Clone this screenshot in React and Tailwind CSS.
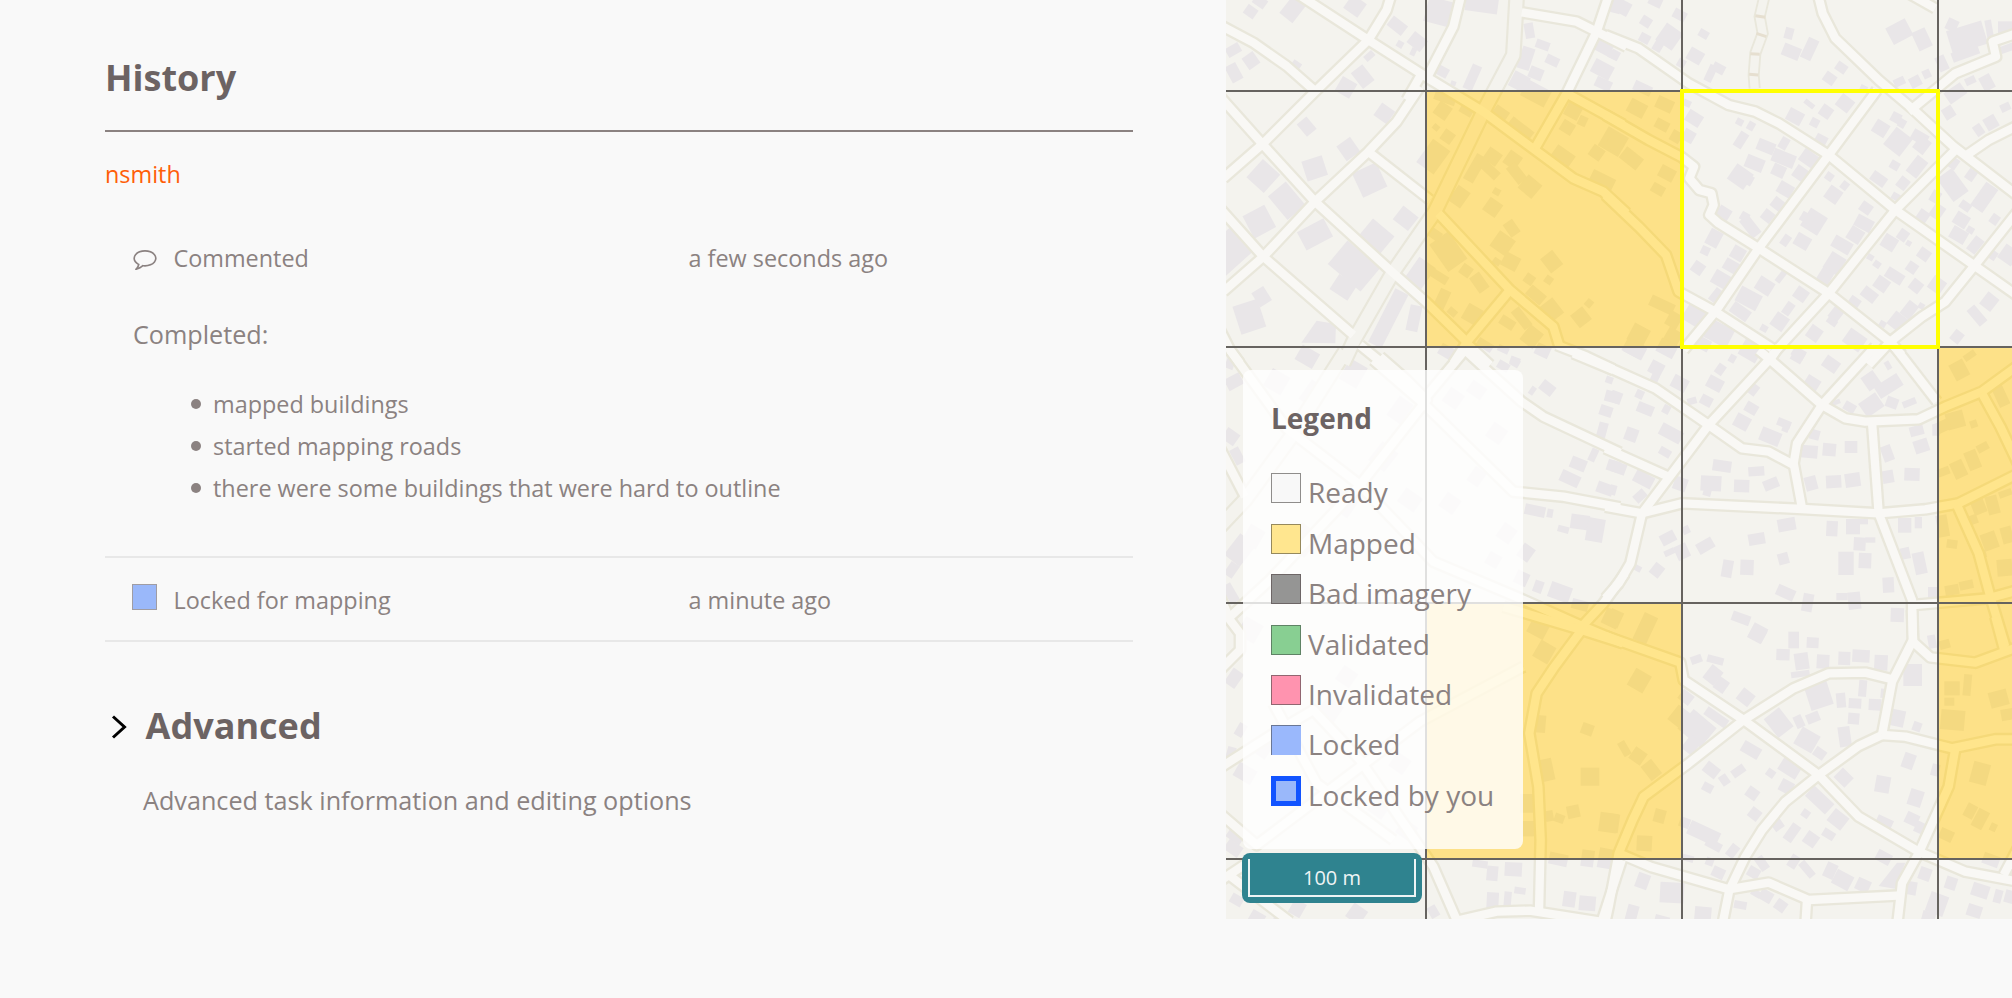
import React from 'react';

/* Street data is stored per map sheet; each sheet has its own origin and uses third-of-a-pixel units. */
const SHEETS = [
  {
    origin: [-6, 0],
    main: ['890,-10 880,165 795,325 645,635 520,815 405,1015 370,1090'],
    roads: [
      '0,75 100,128 200,198 287,275',
      '230,-20 445,120 625,235 790,335 945,450 1060,535 1150,575 1220,640',
      '515,-20 500,30 445,120 285,275 130,430 10,535',
      '0,290 130,435 285,605 515,815 620,908 740,1025',
      '600,260 530,365 445,455 285,605 130,770 10,875',
      '445,455 630,600',
      '0,625 130,770 400,1005',
      '722,-10 700,80 625,225',
      '905,37 1070,65 1130,95 1220,140',
      '1165,-10 1130,95 1040,280 945,445',
      '1045,283 1176,355 1210,374',
      '655,640 870,870 1000,980 1017,1035',
      '870,870 745,1020 700,1090',
      '1010,1035 1100,1070 1180,1108',
      '0,990 30,1050 60,1090',
      '420,1035 500,1100',
      '740,1030 810,1095',
      '600,230 560,300',
    ],
    blds: [
      [92, 35, 36, 32, 35], [120, 5, 40, 30, 35], [218, 28, 50, 66, 38], [40, 150, 44, 30, -30], [93, 182, 40, 42, -35],
      [42, 218, 36, 54, -28], [405, 18, 52, 50, 35], [532, 77, 54, 36, 38], [540, 133, 20, 20, 30], [592, 125, 50, 42, 38],
      [580, 155, 16, 24, 25], [448, 168, 32, 20, -42], [428, 230, 44, 60, -38], [378, 262, 50, 50, 30], [230, 193, 28, 18, 35],
      [493, 340, 48, 46, 35], [260, 380, 38, 48, -40], [385, 447, 50, 54, -35], [284, 505, 64, 62, -18], [130, 528, 70, 74, 42],
      [200, 602, 70, 92, -40], [118, 665, 74, 76, -28], [449, 540, 80, 80, -25], [557, 655, 58, 52, 38], [470, 708, 84, 66, 40],
      [285, 703, 90, 62, -28], [402, 798, 128, 92, 40], [370, 862, 64, 54, 33], [18, 760, 150, 100, -42], [125, 890, 42, 50, -32],
      [88, 950, 78, 88, -18], [505, 955, 44, 180, 27], [582, 955, 36, 78, 12], [600, 820, 60, 80, 35], [655, 35, 74, 76, 15],
      [785, 15, 98, 44, 8], [668, 215, 34, 30, 28], [757, 232, 30, 78, 24], [700, 250, 16, 14, 20], [928, 92, 28, 46, -10],
      [968, 135, 42, 26, 20], [918, 175, 38, 68, 18], [997, 182, 40, 28, 25], [948, 220, 42, 36, 22], [898, 245, 52, 50, 28],
      [948, 280, 80, 54, 28], [1152, 145, 48, 34, 28], [1147, 208, 62, 44, 28], [1185, 165, 26, 28, 28], [1150, 252, 50, 32, 25],
      [1190, 15, 30, 50, 15], [668, 332, 44, 44, 35], [675, 295, 66, 26, 20], [740, 330, 40, 30, 30], [683, 410, 36, 36, 35],
      [648, 382, 20, 18, 40], [640, 470, 64, 86, 36], [718, 590, 44, 56, 35], [765, 505, 34, 86, 30], [818, 470, 46, 42, 35],
      [808, 508, 66, 30, 43], [878, 480, 44, 46, 35], [930, 560, 54, 52, 40], [890, 520, 34, 62, -38], [830, 575, 22, 20, 30],
      [818, 622, 46, 46, 35], [843, 338, 46, 30, 35], [903, 385, 80, 30, 38], [1060, 332, 46, 46, 28], [1042, 382, 40, 36, 32],
      [1088, 363, 26, 30, 25], [1028, 470, 64, 46, 35], [1130, 458, 40, 38, 35], [1180, 425, 70, 66, 30], [1145, 545, 74, 48, 26],
      [875, 685, 34, 46, -35], [848, 730, 58, 56, 35], [872, 785, 50, 44, 28], [830, 785, 24, 20, 35], [995, 785, 46, 54, -38],
      [928, 838, 30, 30, 35], [986, 840, 24, 24, 35], [948, 885, 56, 36, 40], [995, 930, 50, 58, -38], [1107, 910, 22, 24, 40],
      [1083, 952, 46, 48, -38], [685, 755, 70, 100, -35], [738, 812, 34, 34, 35], [778, 848, 36, 56, -35], [650, 825, 74, 26, 32],
      [665, 900, 34, 66, 25], [697, 936, 28, 22, 40], [757, 943, 50, 52, 30], [862, 968, 46, 30, 32], [905, 955, 30, 68, -38],
      [935, 1010, 50, 56, 38], [640, 700, 50, 30, 35], [680, 1055, 46, 36, 30], [968, 1052, 44, 36, 25], [795, 1035, 50, 26, 32],
      [850, 1048, 34, 20, 25], [262, 1070, 60, 50, 30], [885, 1082, 30, 22, 20],
    ],
    polys: ['290,962 348,972 346,1030 244,1028'],
  },
  {
    origin: [386, 0],
    steps: '457,-10 443,50 452,100 430,160 425,225 428,265',
    roads: [
      '-20,105 80,145 230,250 350,315 430,335 500,370 650,465 850,630 1085,795 1220,890',
      '617,-20 632,40 670,115 800,240 900,325 1025,440 1220,590',
      '890,335 1030,220 1152,170 1142,125 1220,98',
      '795,270 650,465 440,745 310,935 215,1050',
      '1030,450 850,630 650,880 480,1065',
      '1060,468 1130,420 1220,375',
      '-20,345 110,420 210,472 246,500 232,535 262,570 298,580 305,615 292,645 320,670 440,745 650,880 830,1022 870,1065',
      '-20,585 80,680 162,765 200,875 310,935 480,1045',
      '1220,630 1085,800 1000,905 930,950 835,1025 770,1095',
      '890,-20 970,25',
    ],
    blds: [
      [28, 20, 54, 42, 28], [130, 5, 40, 28, 25], [203, 45, 40, 30, 28], [102, 65, 32, 30, 32], [98, 115, 32, 28, 28],
      [172, 110, 60, 62, 35], [140, 135, 28, 40, 30], [275, 102, 30, 24, 30], [250, 168, 46, 40, 30], [5, 165, 30, 26, 25],
      [208, 190, 24, 26, 30], [296, 220, 24, 52, 25], [320, 205, 38, 28, 28], [531, 100, 26, 34, 15], [538, 155, 54, 38, 22],
      [593, 147, 34, 66, 25], [653, 235, 36, 32, 35], [688, 203, 34, 28, 35], [862, 95, 66, 56, -28], [930, 118, 44, 60, -25],
      [862, 245, 34, 24, -25], [910, 245, 34, 32, -28], [944, 222, 24, 26, -25], [1020, 75, 34, 36, 25], [1065, 112, 110, 72, -17],
      [1060, 160, 84, 30, -20], [1132, 90, 20, 60, -10], [1180, 82, 44, 36, 0], [990, 190, 30, 46, -25], [1185, 145, 40, 22, -20],
      [1075, 242, 32, 22, -25], [1125, 248, 36, 46, -28], [1030, 280, 60, 40, -35], [1010, 338, 34, 36, -32], [1180, 322, 30, 24, -25],
      [1137, 368, 38, 40, -30], [1100, 390, 26, 34, -35], [75, 325, 54, 44, 28], [158, 313, 52, 38, 25], [150, 375, 42, 30, 28],
      [92, 265, 56, 30, 25], [192, 410, 32, 34, 30], [58, 475, 64, 42, 38], [165, 520, 48, 38, 28], [138, 568, 40, 30, 30],
      [10, 428, 46, 50, 35], [246, 355, 48, 38, 32], [230, 408, 36, 36, 30], [225, 310, 24, 20, 25], [383, 366, 22, 20, 28],
      [417, 378, 22, 26, 30], [387, 420, 28, 50, 32], [549, 350, 48, 40, 28], [592, 312, 34, 16, 38], [608, 368, 26, 26, 28],
      [642, 335, 36, 36, 35], [699, 310, 46, 42, 38], [628, 418, 36, 26, 28], [755, 265, 22, 18, 25], [462, 440, 54, 36, 22],
      [516, 430, 26, 36, 30], [428, 490, 56, 40, 22], [515, 475, 70, 40, 22], [590, 475, 50, 42, 35], [500, 512, 40, 36, 25],
      [565, 520, 40, 40, 35], [385, 530, 60, 56, 35], [410, 540, 26, 30, 30], [520, 568, 46, 38, 30], [497, 612, 36, 34, 38],
      [467, 648, 34, 34, 38], [335, 640, 40, 38, 32], [415, 680, 34, 66, -38], [398, 650, 26, 26, 30], [306, 715, 40, 50, 28],
      [280, 752, 26, 26, 25], [258, 804, 36, 36, 35], [378, 760, 40, 40, 30], [357, 798, 44, 36, 30], [326, 838, 50, 44, 30],
      [310, 885, 22, 44, 38], [652, 530, 24, 24, 35], [664, 584, 44, 44, 35], [698, 557, 22, 26, 38], [606, 665, 60, 62, 32],
      [585, 655, 40, 30, 30], [521, 721, 24, 34, 35], [571, 724, 46, 40, 30], [762, 624, 36, 32, 35], [756, 670, 54, 38, 28],
      [730, 705, 44, 44, 32], [690, 735, 60, 38, 30], [668, 790, 50, 56, 32], [640, 828, 40, 44, 32], [806, 385, 44, 42, 32],
      [852, 353, 30, 30, 28], [858, 425, 62, 66, 38], [870, 370, 22, 26, 30], [923, 412, 50, 34, 30], [930, 435, 40, 46, 38],
      [800, 537, 48, 32, 35], [848, 496, 28, 26, 30], [873, 550, 32, 36, 38], [915, 500, 40, 60, 38], [851, 590, 24, 22, 30],
      [1022, 555, 56, 86, -36], [1077, 525, 28, 34, 35], [1025, 490, 26, 34, 35], [970, 590, 28, 36, 30], [1117, 592, 44, 84, 35],
      [1060, 618, 34, 26, 35], [1048, 660, 44, 40, 32], [1040, 705, 50, 40, 30], [1075, 690, 22, 20, 30], [1090, 735, 32, 50, 38],
      [933, 648, 34, 34, 35], [976, 635, 36, 44, 35], [1148, 658, 26, 30, 35], [1190, 765, 50, 50, 35], [1142, 765, 26, 28, 35],
      [873, 706, 30, 34, 35], [890, 730, 16, 16, 30], [832, 728, 44, 42, 32], [936, 763, 36, 34, 35], [900, 803, 32, 32, 35],
      [848, 828, 56, 34, 32], [912, 858, 36, 36, 38], [809, 852, 42, 40, 35], [772, 884, 48, 34, 38], [728, 905, 34, 26, 35],
      [795, 793, 22, 20, 35], [775, 772, 20, 18, 30], [1132, 905, 42, 46, 38], [1095, 947, 30, 62, -40], [1035, 1010, 32, 36, 38],
      [975, 855, 44, 44, 35], [892, 930, 36, 50, 38], [928, 918, 18, 18, 30], [857, 965, 48, 48, 38], [812, 972, 20, 18, 30],
      [458, 858, 50, 44, 32], [507, 830, 18, 40, 38], [567, 883, 40, 38, 35], [410, 895, 70, 50, 28], [385, 935, 60, 36, 35],
      [529, 926, 26, 40, 35], [503, 965, 44, 46, 35], [456, 985, 22, 20, 30], [245, 945, 56, 56, 32], [320, 1000, 80, 60, 28],
      [270, 1030, 50, 36, 28], [607, 1000, 40, 42, 35], [672, 942, 34, 40, 38], [660, 965, 32, 20, 35], [728, 1020, 60, 50, 35],
      [150, 915, 76, 34, 25], [80, 1005, 54, 56, 28], [185, 960, 40, 46, 30], [180, 1015, 46, 56, 30], [65, 1045, 60, 44, 28],
      [420, 1045, 60, 70, 30], [560, 1060, 40, 30, 30],
    ],
    polys: [],
  },
  {
    origin: [386, 340],
    roads: [
      '-20,78 130,145 290,255 390,325 470,335 545,375',
      '500,20 480,50 290,255 90,520 55,670 20,730 -20,775',
      '440,30 470,55 630,195 700,235 760,245 920,238 1000,200 1110,155 1220,75',
      '790,20 630,195 555,310 545,370 570,505',
      '840,10 975,185',
      '1110,160 1165,260 1220,375',
      '780,245 800,520',
      '-20,500 90,520 210,490 570,507 800,520 940,508 1040,490 1220,400',
      '-20,325 165,408',
      '800,520 900,780 903,900',
      '1035,495 1100,640 1135,770 1180,920',
      '905,795 1130,775 1220,750',
    ],
    blds: [
      [70, 30, 60, 40, 28], [165, 25, 56, 44, 28], [133, 85, 42, 40, 28], [128, 115, 24, 24, 25], [203, 130, 48, 40, 28],
      [83, 163, 24, 26, 25], [100, 207, 50, 32, 22], [163, 208, 22, 26, 28], [12, 172, 34, 36, 20], [58, 284, 38, 40, 20],
      [177, 280, 70, 38, 28], [159, 337, 36, 24, 30], [20, 384, 44, 34, 20], [95, 418, 60, 38, 28], [84, 468, 38, 28, -42],
      [205, 432, 40, 40, 20], [3, 450, 20, 30, 15], [309, 131, 48, 38, 28], [325, 88, 26, 32, 35], [361, 56, 20, 24, 30],
      [283, 182, 36, 30, 28], [240, 183, 28, 20, -15], [422, 147, 32, 34, 38], [418, 205, 38, 32, 30], [390, 246, 46, 42, 28],
      [475, 290, 62, 42, 22], [516, 250, 42, 24, 22], [522, 262, 20, 28, 22], [558, 48, 36, 38, 30], [600, 130, 44, 38, 32],
      [657, 73, 48, 38, 35], [777, 122, 44, 48, -35], [830, 138, 80, 42, -32], [778, 195, 62, 50, -35], [840, 188, 36, 32, 20],
      [892, 188, 42, 20, -22], [713, 202, 36, 28, 30], [672, 187, 26, 14, -20], [828, 76, 16, 26, -30], [785, 55, 34, 44, 35],
      [608, 284, 30, 30, 15], [592, 335, 50, 38, 5], [652, 329, 40, 38, 5], [717, 321, 38, 36, 0], [826, 340, 32, 48, -20],
      [828, 410, 34, 38, -10], [914, 272, 42, 30, -15], [928, 318, 44, 40, -18], [900, 403, 46, 38, 2], [972, 270, 22, 34, 0],
      [330, 378, 56, 34, 8], [297, 430, 62, 46, 3], [286, 455, 24, 26, 15], [389, 438, 46, 38, 2], [433, 394, 48, 28, -4],
      [477, 432, 46, 32, -22], [597, 430, 36, 42, -15], [665, 425, 46, 38, -3], [722, 420, 46, 42, -8], [524, 554, 54, 38, -10],
      [434, 597, 50, 34, -10], [514, 656, 32, 34, -15], [346, 686, 32, 52, 10], [405, 682, 40, 46, 2], [280, 617, 52, 34, -30],
      [168, 594, 46, 34, -28], [222, 570, 22, 24, -25], [210, 635, 40, 44, -25], [172, 637, 32, 18, -25], [135, 691, 34, 38, 38],
      [77, 685, 22, 18, 28], [660, 566, 34, 46, 3], [723, 560, 42, 46, 0], [755, 545, 26, 16, 0], [743, 612, 36, 40, 3],
      [775, 600, 30, 16, 0], [702, 670, 46, 70, 0], [759, 662, 38, 46, 2], [878, 556, 40, 44, 0], [919, 548, 22, 34, 0],
      [880, 640, 28, 34, -12], [923, 670, 36, 66, -12], [829, 735, 34, 46, -3], [963, 758, 30, 34, 0], [521, 758, 56, 34, 24],
      [587, 788, 32, 54, 10], [690, 770, 34, 22, 0], [727, 782, 38, 52, -6], [856, 825, 40, 42, 2], [387, 835, 56, 30, 20],
      [437, 880, 46, 50, 28], [100, 865, 44, 88, 25], [8, 835, 40, 50, 25], [1042, 90, 46, 54, -28], [1073, 47, 38, 20, -35],
      [1165, 165, 34, 70, -25], [1030, 240, 54, 50, -15], [990, 260, 50, 34, -25], [1085, 252, 22, 22, -20], [1082, 360, 38, 58, -22],
      [1112, 322, 36, 24, -28], [1040, 388, 40, 52, -25], [995, 395, 36, 24, -20], [992, 558, 34, 66, -10], [1020, 612, 32, 26, 8],
      [1133, 603, 46, 52, -20], [1185, 585, 34, 50, -15], [1080, 540, 34, 28, -20], [1100, 500, 40, 44, -22], [1142, 495, 36, 56, -15],
      [1180, 460, 40, 20, -20], [1020, 750, 42, 30, -10], [1063, 735, 42, 26, -12], [1113, 642, 20, 22, -15], [1178, 683, 46, 50, -5],
    ],
    polys: [],
  },
  {
    origin: [386, 620],
    roads: [
      '-20,48 205,128 215,180 395,300 620,465 740,590 920,695 1060,755 1220,785',
      '900,-30 903,60 840,185 810,345',
      '903,65 955,112 1090,128 1220,80',
      '1150,-10 1178,95',
      '840,178 760,158 650,160 545,205 395,300 230,430 95,530 62,600 20,700 -10,860 -25,930',
      '810,345 880,350 1020,385 1150,358 1220,358',
      '1030,385 1010,500 920,700 870,790 855,920',
      '810,345 740,378 620,465 520,545 450,630 400,710 352,810 330,920',
      '20,700 120,742 350,808 470,788 590,840 870,826',
      '585,840 580,920',
      '1220,680 1175,765',
    ],
    blds: [
      [437, 42, 46, 42, 28], [545, 60, 32, 50, 0], [602, 68, 36, 32, 3], [513, 104, 40, 34, 2], [569, 124, 42, 50, -8],
      [633, 125, 38, 42, 3], [697, 115, 36, 40, 2], [747, 108, 52, 38, 3], [807, 128, 40, 46, 3], [565, 162, 56, 18, -8],
      [253, 118, 34, 24, -20], [310, 120, 50, 22, 15], [303, 165, 42, 50, 38], [328, 195, 36, 40, 35], [401, 232, 44, 42, 38],
      [902, 165, 56, 66, 0], [960, 65, 24, 40, -10], [620, 225, 70, 78, -18], [687, 241, 28, 44, -5], [729, 250, 38, 30, 3],
      [752, 205, 24, 50, 5], [789, 254, 38, 34, 3], [815, 220, 18, 28, 5], [725, 296, 34, 34, 5], [698, 350, 36, 60, -8],
      [603, 293, 40, 30, -22], [561, 305, 26, 38, -25], [500, 308, 58, 72, -38], [585, 360, 62, 58, 30], [623, 400, 36, 30, 35],
      [417, 390, 58, 36, 30], [533, 445, 62, 42, 32], [523, 500, 40, 38, 28], [476, 460, 26, 24, 35], [379, 453, 42, 26, -35],
      [298, 450, 46, 36, 38], [337, 480, 26, 32, -35], [287, 503, 32, 26, 28], [421, 520, 36, 34, 35], [428, 582, 34, 34, 38],
      [497, 615, 32, 30, -35], [540, 638, 30, 56, 35], [597, 658, 40, 40, 35], [650, 643, 38, 26, 32], [581, 581, 24, 24, 35],
      [623, 540, 82, 42, 43], [678, 598, 52, 46, 38], [695, 473, 46, 40, 45], [812, 493, 44, 50, 10], [890, 423, 36, 46, 20],
      [911, 534, 42, 50, 18], [858, 295, 40, 50, 12], [915, 320, 26, 28, 20], [900, 597, 40, 36, 25], [922, 622, 26, 34, 25],
      [818, 605, 50, 26, 25], [970, 450, 24, 36, 15], [255, 325, 90, 76, 40], [313, 292, 76, 28, 35], [222, 232, 40, 34, 38],
      [202, 290, 48, 56, 38], [238, 375, 40, 50, 38], [275, 640, 96, 44, 25], [305, 675, 50, 26, 28], [218, 608, 32, 30, 20],
      [362, 693, 28, 40, 38], [82, 182, 54, 58, 30], [118, 450, 40, 54, -38], [78, 408, 42, 42, 35], [37, 386, 24, 46, -30],
      [143, 588, 34, 40, 15], [97, 670, 46, 46, 3], [5, 610, 32, 56, 8], [92, 783, 38, 46, 20], [180, 818, 72, 62, 3],
      [60, 880, 34, 50, 15], [150, 900, 44, 26, 15], [273, 880, 50, 40, 5], [385, 855, 38, 24, 10], [319, 758, 38, 32, 25],
      [228, 715, 34, 20, 15], [293, 725, 24, 24, 20], [450, 730, 28, 44, -35], [425, 758, 36, 32, 30], [462, 828, 40, 34, 30],
      [506, 857, 34, 34, 35], [432, 820, 30, 20, 30], [545, 725, 28, 40, 32], [585, 748, 24, 54, -40], [655, 752, 34, 46, 25],
      [692, 780, 56, 46, 28], [753, 796, 42, 38, 25], [815, 712, 46, 34, 28], [900, 805, 28, 40, 10], [939, 762, 36, 38, 20],
      [975, 852, 56, 62, 20], [950, 890, 40, 30, 15], [1017, 790, 34, 38, 18], [1105, 812, 52, 40, 18], [1158, 829, 24, 40, 15],
      [1192, 830, 28, 38, 15], [1087, 873, 44, 36, 18], [1137, 720, 50, 34, 20], [998, 73, 32, 26, -15], [1020, 205, 46, 42, 0],
      [1066, 195, 24, 64, 5], [1012, 245, 30, 24, 0], [1022, 300, 72, 60, 5], [1160, 236, 56, 48, -15], [1190, 283, 46, 34, -10],
      [1104, 460, 52, 64, 15], [1075, 573, 32, 42, 28], [1105, 597, 36, 58, 28], [1144, 622, 20, 24, 25], [1003, 645, 42, 34, 25],
    ],
    polys: ['855,728 880,728 848,806 800,798'],
  },
  {
    origin: [-6, 360],
    main: ['375,-25 210,235 75,420 -10,510'],
    roads: [
      '0,265 75,410',
      '30,-30 200,205 420,375 620,120 560,60 480,-10',
      '460,0 610,130 880,395 1030,410 1200,442',
      '735,-30 610,120',
      '735,-30 800,30 905,125 970,170 1200,278',
      '1060,-20 1180,30',
      '420,375 640,605 900,715 1090,800 1210,850',
      '1215,640 1150,730 1085,800',
      '20,780 150,660 420,375',
    ],
    blds: [
      [42, 65, 50, 38, -28], [30, 12, 26, 30, 20], [32, 230, 44, 40, 35], [52, 288, 30, 50, -28], [170, 65, 60, 60, 30],
      [275, 100, 46, 70, 35], [400, 40, 60, 70, 30], [540, 150, 50, 70, 35], [490, 290, 60, 70, 38], [370, 430, 70, 60, 35],
      [250, 540, 70, 80, 38], [60, 570, 60, 80, 38], [100, 530, 50, 60, 30], [32, 700, 30, 60, -30], [35, 630, 30, 44, 35],
      [700, 115, 50, 50, 35], [770, 90, 50, 40, 35], [830, 220, 50, 50, 35], [690, 430, 50, 50, 35], [770, 350, 40, 50, 35],
      [570, 420, 60, 50, 35], [860, 520, 46, 50, 35], [982, 84, 44, 34, 38], [937, 92, 16, 26, 35], [1175, 110, 40, 34, 15],
      [1158, 153, 38, 32, 18], [1147, 210, 28, 46, 15], [1120, 285, 22, 40, 25], [1075, 312, 48, 36, 22], [1050, 356, 60, 36, 25],
      [1180, 318, 38, 34, 18], [1155, 386, 50, 34, 20], [945, 452, 62, 32, 12], [990, 460, 18, 26, 10], [1080, 486, 56, 44, 8],
      [1126, 510, 52, 70, 10], [1030, 508, 34, 20, 15], [918, 578, 40, 46, 35], [905, 655, 40, 40, 25], [955, 680, 28, 36, 20],
      [1020, 697, 66, 48, 20], [1080, 735, 50, 30, 15], [820, 600, 40, 40, 30], [850, 18, 36, 26, 30], [885, 8, 28, 24, 30],
      [1168, 60, 22, 20, 20],
    ],
    polys: [],
  },
  {
    origin: [-6, 600],
    roads: [
      '0,-10 30,60 60,100 60,150 0,210',
      '-10,510 170,395 280,330 420,480 640,800 710,960',
      '0,640 110,735 600,365 910,200',
      '160,310 290,550 520,720',
      '1085,90 1000,205 950,280 928,400 955,560 962,720 957,935',
      '850,20 1085,90 1210,130',
      '-10,850 80,790',
      '20,820 210,965',
      '700,965 830,935 930,932 1140,965',
      '1205,780 1145,965',
    ],
    blds: [
      [42, 235, 38, 52, 35], [62, 390, 26, 40, 30], [30, 470, 26, 60, 15], [45, 710, 50, 30, 35], [40, 745, 50, 36, 35],
      [50, 900, 38, 30, 30], [110, 955, 44, 40, 30], [232, 925, 40, 46, 30], [180, 950, 30, 30, 30], [410, 942, 50, 50, 35],
      [640, 935, 28, 36, -30], [75, 520, 60, 46, 30], [130, 440, 50, 60, 35], [330, 330, 60, 60, 35], [380, 230, 50, 50, 35],
      [540, 490, 50, 50, 35], [480, 620, 50, 60, 35], [560, 690, 50, 50, 35], [210, 105, 30, 50, -38], [90, 90, 60, 60, 30],
      [955, 85, 56, 50, 28], [973, 156, 52, 56, 30], [962, 372, 30, 52, 5], [1102, 388, 36, 34, 20], [980, 510, 40, 66, -12],
      [1110, 530, 56, 54, 0], [920, 610, 40, 56, 0], [925, 686, 34, 46, 0], [988, 648, 24, 32, -10], [1018, 655, 30, 26, 20],
      [1060, 635, 38, 38, -12], [1165, 668, 54, 58, 8], [1175, 55, 50, 50, 25], [1015, 778, 56, 36, 12], [1103, 775, 38, 50, 8],
      [1155, 775, 40, 60, 10], [880, 808, 52, 42, 3], [817, 820, 34, 44, 5], [780, 792, 46, 22, 8], [900, 872, 34, 20, 8],
      [818, 902, 36, 50, 3], [863, 897, 22, 44, 5], [1048, 898, 38, 46, 8], [1102, 910, 50, 44, 5],
    ],
    polys: [],
  },
];

const at = ([x, y]) => `translate(${x} ${y}) scale(0.33333)`;

function Layer({ render }) {
  return SHEETS.map((s, i) => (
    <g key={i} transform={at(s.origin)}>
      {render(s)}
    </g>
  ));
}

function Lines({ items, color, width }) {
  return (items || []).map((p, i) => (
    <polyline key={i} points={p} stroke={color} strokeWidth={width} fill="none" strokeLinejoin="round" />
  ));
}

const PLAIN = { land: '#f4f3ee', building: '#e9e6e8', casing: '#e9e7db', road: '#f9f8f5', step: '#e6dfd0' };
const MAPPED = { land: '#fde188', building: '#f4d981', casing: '#f5d979', road: '#ffe58c', step: '#f5d979' };

function Streets({ colors }) {
  return (
    <>
      <rect width="786" height="919" fill={colors.land} />
      <Layer
        render={(s) => (
          <g fill={colors.building}>
            {s.blds.map(([x, y, w, h, r], i) => (
              <rect key={i} x={x - w / 2} y={y - h / 2} width={w} height={h} transform={`rotate(${r} ${x} ${y})`} />
            ))}
            {s.polys.map((p) => (
              <polygon key={p} points={p} />
            ))}
          </g>
        )}
      />
      <Layer render={(s) => <Lines items={s.roads} color={colors.casing} width={39} />} />
      <Layer render={(s) => <Lines items={s.main} color={colors.casing} width={50} />} />
      <Layer render={(s) => <Lines items={s.main} color={colors.land} width={37} />} />
      <Layer render={(s) => <Lines items={s.roads} color={colors.road} width={25} />} />
      <g transform={at(SHEETS[1].origin)} fill="none">
        <polyline points={SHEETS[1].steps} stroke={colors.casing} strokeWidth="36" />
        <polyline points={SHEETS[1].steps} stroke={colors.land} strokeWidth="25" />
        <path d="M430 47l30 5M433 100l30 10M415 161l28 2M411 223l28 2" stroke={colors.step} strokeWidth="9" />
      </g>
    </>
  );
}

function StreetMap() {
  return (
    <svg className="block h-full w-full" viewBox="0 0 786 919">
      <defs>
        <clipPath id="mapped-cells">
          <rect x="200" y="91" width="256" height="256" />
          <rect x="200" y="603" width="256" height="256" />
          <rect x="712" y="347" width="256" height="256" />
          <rect x="712" y="603" width="256" height="256" />
        </clipPath>
      </defs>
      <Streets colors={PLAIN} />
      <g clipPath="url(#mapped-cells)">
        <Streets colors={MAPPED} />
      </g>
      <path d="M200 0V919M456 0V919M712 0V919M0 91H786M0 347H786M0 603H786M0 859H786" stroke="#66635f" strokeWidth="2" />
      <rect x="456" y="91" width="256" height="256" fill="none" stroke="#ffff00" strokeWidth="4" />
    </svg>
  );
}

const LEGEND = [
  ['Ready', 'border border-[#8f8d8b] bg-[#f8f8f8]'],
  ['Mapped', 'border border-[#96895c] bg-[#ffe68f]'],
  ['Bad imagery', 'border border-[#6d6666] bg-[#959594]'],
  ['Validated', 'border border-[#5f8365] bg-[#88cf92]'],
  ['Invalidated', 'border border-[#916670] bg-[#ff93af]'],
  ['Locked', 'border-t border-l border-[#6a7795] bg-[#9ab8fc]'],
  ['Locked by you', 'border-[5px] border-[#1254ff] bg-[#9ab8fa]'],
];

function Legend() {
  return (
    <div className="absolute top-[370px] left-[17px] h-[479px] w-[280px] rounded-lg bg-white/80 pt-[27px] pl-[28px]">
      <h3 className="text-[28px] leading-[42px] font-bold text-[#6c6363]">Legend</h3>
      <ul className="mt-[28.28px]">
        {LEGEND.map(([label, swatch]) => (
          <li key={label} className="flex h-[50.4px] items-center gap-[7px]">
            <span className={`mb-[8px] size-[30px] shrink-0 ${swatch}`} />
            <span className="text-[28px] leading-[50px] whitespace-nowrap">{label}</span>
          </li>
        ))}
      </ul>
    </div>
  );
}

function ScaleBar() {
  return (
    <div className="absolute top-[853px] left-[16px] h-[50px] w-[180px] rounded-lg bg-[#2f838f] p-[6px]">
      <div className="h-[38px] border-2 border-t-0 border-[#eef4f5] text-center text-[20px] leading-[38px] text-[#eef4f5]">100 m</div>
    </div>
  );
}

function CommentIcon() {
  return (
    <svg className="h-[20px] w-[24px]" viewBox="0 256 1792 1536" fill="currentColor">
      <path d="M896 384q-204 0-381.5 69.5t-282 187.5-104.5 255q0 112 71.5 213.5t201.5 175.5l87 50-27 96q-24 91-70 172 152-63 275-171l43-38 57 6q69 8 130 8 204 0 381.5-69.5t282-187.5 104.5-255-104.5-255-282-187.5-381.5-69.5zm896 512q0 174-120 321.5t-326 233-450 85.5q-70 0-145-8-198 175-460 242-49 14-114 22h-5q-15 0-27-10.5t-16-27.5v-1q-3-4-.5-12t2-10 4.5-9.5l6-9 7-8.5 8-9q7-8 31-34.5t34.5-38 31-39.5 32.5-51 27-59 26-76q-157-89-247.5-220t-90.5-281q0-174 120-321.5t326-233 450-85.5 450 85.5 326 233 120 321.5z" />
    </svg>
  );
}

function HistoryRow({ icon, action, time }) {
  return (
    <div className="flex h-[36px] items-center pl-[27px]">
      <span className="flex w-[41.5px] shrink-0">{icon}</span>
      <span className="w-[515px] shrink-0">{action}</span>
      <span>{time}</span>
    </div>
  );
}

const NOTES = ['mapped buildings', 'started mapping roads', 'there were some buildings that were hard to outline'];

export default function App() {
  return (
    <div className="flex h-[998px] w-[2012px] items-start overflow-hidden bg-[#f9f9f9] font-['Open_Sans','Noto_Sans',sans-serif] text-[23.4px] leading-[36px] text-[#8b8281]">
      <div className="w-[1226px] shrink-0 pt-[56px] pr-[93px] pl-[105px]">
        <h2 className="border-b-2 border-[#8b8281] pb-[30px] text-[36px] leading-[44px] font-bold text-[#6c6363]">History</h2>
        <div className="border-b-2 border-[#e8e8e8] pt-[24px] pb-[47px]">
          <a className="block text-[#ff5e08]">nsmith</a>
          <div className="mt-[48px]">
            <HistoryRow icon={<span className="mt-[3px] ml-[0.5px]"><CommentIcon /></span>} action="Commented" time="a few seconds ago" />
          </div>
          <p className="mt-[40px] pl-[28px] text-[25.2px]">Completed:</p>
          <ul className="mt-[31px] pl-[86px]">
            {NOTES.map((note) => (
              <li key={note} className="flex h-[42px] items-center gap-[12px]">
                <span className="size-[10px] rounded-full bg-[#8b8281]" />
                {note}
              </li>
            ))}
          </ul>
        </div>
        <div className="border-b-2 border-[#e8e8e8] pt-[24px] pb-[22px]">
          <HistoryRow
            icon={<span className="mb-[6px] h-[26px] w-[25px] border border-[#a09da3] bg-[#9ab8fa]" />}
            action="Locked for mapping"
            time="a minute ago"
          />
        </div>
        <div className="mt-[62px] flex items-center">
          <svg className="mt-[2px] ml-[6px] h-[24px] w-[16px]" viewBox="0 0 16 24" fill="none" stroke="#000" strokeWidth="3">
            <path d="M2 1.5L13.5 12L2 22.5" />
          </svg>
          <h2 className="ml-[18.6px] text-[36px] leading-[44px] font-bold text-[#6c6363]">Advanced</h2>
        </div>
        <p className="mt-[34px] pl-[38px] text-[25.2px]">Advanced task information and editing options</p>
      </div>
      <div className="relative h-[919px] w-[786px] shrink-0 overflow-hidden">
        <StreetMap />
        <Legend />
        <ScaleBar />
      </div>
    </div>
  );
}
